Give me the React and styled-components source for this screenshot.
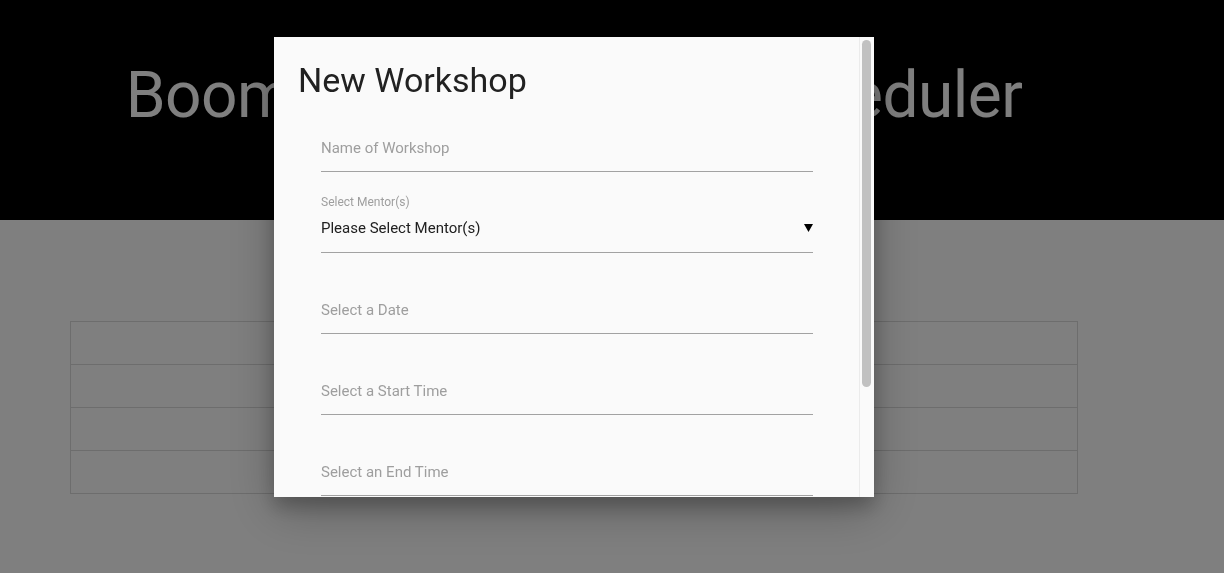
import React from 'react';
import styled, { createGlobalStyle } from 'styled-components';

const GlobalStyle = createGlobalStyle`
    html, body {
        margin: 0;
        padding: 0;
        background: #ffffff;
        font-family: Roboto, "Noto Sans", "Liberation Sans", sans-serif;
    }
    * {
        box-sizing: border-box;
    }
`

const rows = [0, 1, 2, 3];

const fields = [
    { kind: 'text', placeholder: 'Name of Workshop' },
    { kind: 'select', label: 'Select Mentor(s)', value: 'Please Select Mentor(s)' },
    { kind: 'text', placeholder: 'Select a Date' },
    { kind: 'text', placeholder: 'Select a Start Time' },
    { kind: 'text', placeholder: 'Select an End Time' },
];

const App = () => {
    return (
        <Page>
            <GlobalStyle />

            <Header>
                <Inner>
                    <Title>Boomtown Workshop Scheduler</Title>
                </Inner>
            </Header>

            <Main>
                <Table>
                    <tbody>
                        {rows.map(r => (
                            <tr key={r}>
                                <td />
                            </tr>
                        ))}
                    </tbody>
                </Table>
            </Main>

            <Overlay />

            <Dialog>
                <DialogBody>
                    <DialogTitle>New Workshop</DialogTitle>
                    <Form>
                        {fields.map((f, i) =>
                            f.kind === 'select' ? (
                                <Field key={i} pad={12}>
                                    <SmallLabel>{f.label}</SmallLabel>
                                    <SelectRow>
                                        <span>{f.value}</span>
                                        <svg width="9" height="8" viewBox="0 0 9 8">
                                            <polygon points="0,0 9,0 4.5,8" fill="#000" />
                                        </svg>
                                    </SelectRow>
                                </Field>
                            ) : (
                                <Field key={i} pad={11}>
                                    <Input placeholder={f.placeholder} />
                                </Field>
                            )
                        )}
                    </Form>
                </DialogBody>
                <ScrollTrack>
                    <Thumb />
                </ScrollTrack>
            </Dialog>
        </Page>
    )
}


const Page = styled.div`
    min-height: 573px;
    position: relative;
`

const Header = styled.header`
    background: #000;
    height: 220px;
`

const Inner = styled.div`
    width: 1148px;
    padding-top: 64px;
    text-align: center;
`

const Title = styled.h1`
    margin: 0;
    font-size: 64px;
    line-height: 64px;
    font-weight: 400;
    color: #ffffff;
    letter-spacing: -0.55px;
`

const Main = styled.main`
    width: 1148px;
    padding-top: 101px;
`

const Table = styled.table`
    width: 1008px;
    margin: 0 auto;
    border-collapse: collapse;

    td {
        height: 43px;
        border: 1px solid #dadada;
        padding: 0;
    }
`

const Overlay = styled.div`
    position: fixed;
    inset: 0;
    background: rgba(0, 0, 0, 0.5);
`

const Dialog = styled.div`
    position: fixed;
    top: 37px;
    left: 274px;
    width: 600px;
    height: 460px;
    display: flex;
    overflow: hidden;
    background: #fafafa;
    box-shadow: 0 10px 18px rgba(0, 0, 0, 0.22), 0 14px 45px rgba(0, 0, 0, 0.25);
`

const DialogBody = styled.div`
    flex: 1;
    overflow: hidden;
    padding-top: 23px;
`

const ScrollTrack = styled.div`
    width: 15px;
    flex-shrink: 0;
    border-left: 1px solid #ebebeb;
    padding: 3px 0 0 2px;
    background: #fafafa;
`

const Thumb = styled.div`
    width: 9px;
    height: 347px;
    border-radius: 5px;
    background: #c1c1c1;
`

const DialogTitle = styled.h2`
    margin: 0;
    padding-left: 24px;
    font-size: 34px;
    line-height: 40px;
    font-weight: 400;
    color: #212121;
`

const Form = styled.div`
    margin-left: 47px;
    width: 492px;
    display: flex;
    flex-direction: column;
    gap: 9px;
`

const Field = styled.div`
    height: 72px;
    flex-shrink: 0;
    display: flex;
    flex-direction: column;
    justify-content: flex-end;
    padding-bottom: ${p => p.pad}px;
    border-bottom: 1px solid #a2a2a2;
`

const Input = styled.input`
    border: none;
    outline: none;
    background: transparent;
    padding: 0;
    height: 24px;
    font-family: Roboto, "Noto Sans", sans-serif;
    font-size: 15px;
    color: #212121;

    &::placeholder {
        color: #9e9e9e;
    }
`

const SmallLabel = styled.div`
    font-size: 12px;
    line-height: 16px;
    color: #9e9e9e;
    margin-bottom: 6px;
`

const SelectRow = styled.div`
    display: flex;
    align-items: center;
    justify-content: space-between;
    height: 24px;
    font-size: 15px;
    color: #212121;
`

export default App;
